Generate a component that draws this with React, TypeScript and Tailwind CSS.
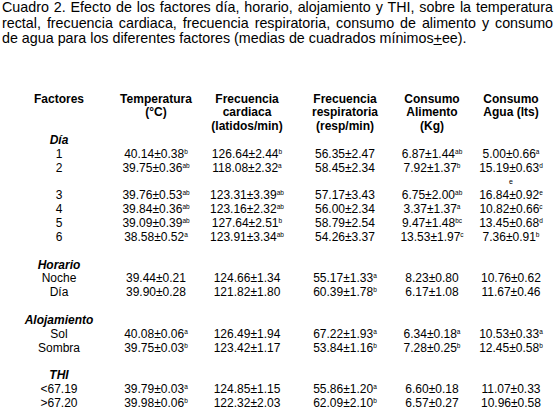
import React from "react"

type Cell = [string, string?]
type Row =
  | { kind: "group"; label: string }
  | { kind: "data"; label: string; cells: Cell[] }
  | { kind: "blank" }
  | { kind: "wrap"; col: number; text: string }

const rows: Row[] = [
  { kind: "group", label: "Día" },
  { kind: "data", label: "1", cells: [["40.14±0.38", "b"], ["126.64±2.44", "b"], ["56.35±2.47"], ["6.87±1.44", "ab"], ["5.00±0.66", "a"]] },
  { kind: "data", label: "2", cells: [["39.75±0.36", "ab"], ["118.08±2.32", "a"], ["58.45±2.34"], ["7.92±1.37", "b"], ["15.19±0.63", "d"]] },
  { kind: "wrap", col: 4, text: "e" },
  { kind: "data", label: "3", cells: [["39.76±0.53", "ab"], ["123.31±3.39", "ab"], ["57.17±3.43"], ["6.75±2.00", "ab"], ["16.84±0.92", "e"]] },
  { kind: "data", label: "4", cells: [["39.84±0.36", "ab"], ["123.16±2.32", "ab"], ["56.00±2.34"], ["3.37±1.37", "a"], ["10.82±0.66", "c"]] },
  { kind: "data", label: "5", cells: [["39.09±0.39", "ab"], ["127.64±2.51", "b"], ["58.79±2.54"], ["9.47±1.48", "bc"], ["13.45±0.68", "d"]] },
  { kind: "data", label: "6", cells: [["38.58±0.52", "a"], ["123.91±3.34", "ab"], ["54.26±3.37"], ["13.53±1.97", "c"], ["7.36±0.91", "b"]] },
  { kind: "blank" },
  { kind: "group", label: "Horario" },
  { kind: "data", label: "Noche", cells: [["39.44±0.21"], ["124.66±1.34"], ["55.17±1.33", "a"], ["8.23±0.80"], ["10.76±0.62"]] },
  { kind: "data", label: "Día", cells: [["39.90±0.28"], ["121.82±1.80"], ["60.39±1.78", "b"], ["6.17±1.08"], ["11.67±0.46"]] },
  { kind: "blank" },
  { kind: "group", label: "Alojamiento" },
  { kind: "data", label: "Sol", cells: [["40.08±0.06", "a"], ["126.49±1.94"], ["67.22±1.93", "a"], ["6.34±0.18", "a"], ["10.53±0.33", "a"]] },
  { kind: "data", label: "Sombra", cells: [["39.75±0.03", "b"], ["123.42±1.17"], ["53.84±1.16", "b"], ["7.28±0.25", "b"], ["12.45±0.58", "b"]] },
  { kind: "blank" },
  { kind: "group", label: "THI" },
  { kind: "data", label: "<67.19", cells: [["39.79±0.03", "a"], ["124.85±1.15"], ["55.86±1.20", "a"], ["6.60±0.18"], ["11.07±0.33"]] },
  { kind: "data", label: ">67.20", cells: [["39.98±0.06", "b"], ["122.32±2.03"], ["62.09±2.10", "b"], ["6.57±0.27"], ["10.96±0.58"]] },
]

function Sup({ children }: { children: React.ReactNode }) {
  return <span className="relative -top-[4px] text-[6.5px] leading-[0]">{children}</span>
}

export default function App() {
  return (
    <div className="w-[555px] h-[412px] bg-white text-black font-['Liberation_Sans',Arial,sans-serif] overflow-hidden">
      {/* caption, justified like the source document */}
      <div className="px-[2px] text-[14.3px] leading-[15.5px]">
        <div className="text-justify [text-align-last:justify]">
          Cuadro 2. Efecto de los factores día, horario, alojamiento y THI, sobre la temperatura
        </div>
        <div className="text-justify [text-align-last:justify]">
          rectal, frecuencia cardiaca, frecuencia respiratoria, consumo de alimento y consumo
        </div>
        <div>
          de agua para los diferentes factores (medias de cuadrados mínimos<span className="underline">+</span>ee).
        </div>
      </div>

      <div className="mt-[46px] grid grid-cols-[118px_76px_106px_90px_84px_74px] text-center text-[12px] leading-[13.85px]">
        {/* header */}
        <div className="font-bold">Factores</div>
        <div className="font-bold">Temperatura<br />(°C)</div>
        <div className="font-bold">Frecuencia<br />cardiaca<br />(latidos/min)</div>
        <div className="font-bold">Frecuencia<br />respiratoria<br />(resp/min)</div>
        <div className="font-bold">Consumo<br />Alimento<br />(Kg)</div>
        <div className="font-bold">Consumo<br />Agua (lts)</div>

        {rows.map((r, i) => {
          if (r.kind === "group")
            return (
              <div key={i} className="col-span-6 grid grid-cols-subgrid">
                <div className="font-bold italic">{r.label}</div>
              </div>
            )
          if (r.kind === "blank") return <div key={i} className="col-span-6 h-[13.85px]" />
          if (r.kind === "wrap")
            return (
              <div key={i} className="col-span-6 grid grid-cols-subgrid h-[13.85px]">
                <div className="col-start-6 relative -top-[1px] text-[7px] leading-[13.85px]">{r.text}</div>
              </div>
            )
          return (
            <div key={i} className="col-span-6 grid grid-cols-subgrid">
              <div>{r.label}</div>
              {r.cells.map(([v, s], j) => (
                <div key={j} className="whitespace-nowrap">
                  {v}
                  {s && <Sup>{s}</Sup>}
                </div>
              ))}
            </div>
          )
        })}
      </div>
    </div>
  )
}
